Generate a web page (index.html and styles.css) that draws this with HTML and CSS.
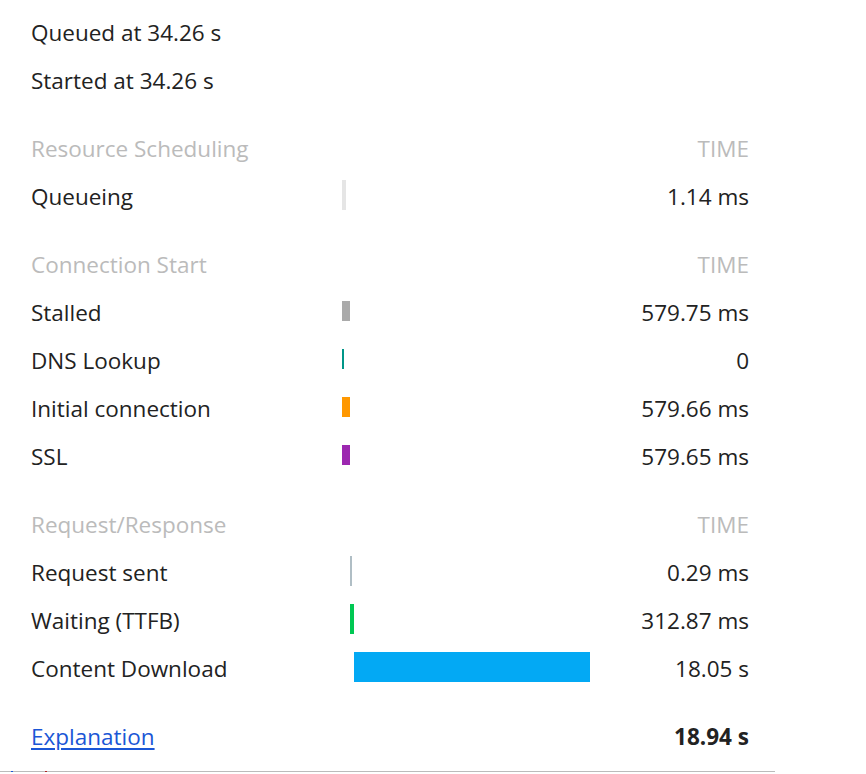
FILE: index.html
```html
<!DOCTYPE html>
<html>
<head>
<meta charset="utf-8">
<link rel="stylesheet" href="styles.css">
</head>
<body>
<div class="timing">
  <div class="meta">Queued at 34.26 s</div>
  <div class="meta">Started at 34.26 s</div>

  <div class="group">
    <div class="row head"><span class="label">Resource Scheduling</span><span></span><span class="time">TIME</span></div>
    <div class="row"><span class="label">Queueing</span><span class="track"><span class="bar tall queueing" style="margin-left:0;width:4px"></span></span><span class="time">1.14 ms</span></div>
  </div>

  <div class="group">
    <div class="row head"><span class="label">Connection Start</span><span></span><span class="time">TIME</span></div>
    <div class="row"><span class="label">Stalled</span><span class="track"><span class="bar stalled" style="margin-left:0;width:8px"></span></span><span class="time">579.75 ms</span></div>
    <div class="row"><span class="label">DNS Lookup</span><span class="track"><span class="bar dns" style="margin-left:0;width:2px"></span></span><span class="time">0</span></div>
    <div class="row"><span class="label">Initial connection</span><span class="track"><span class="bar connecting" style="margin-left:0;width:8px"></span></span><span class="time">579.66 ms</span></div>
    <div class="row"><span class="label">SSL</span><span class="track"><span class="bar ssl" style="margin-left:0;width:8px"></span></span><span class="time">579.65 ms</span></div>
  </div>

  <div class="group">
    <div class="row head"><span class="label">Request/Response</span><span></span><span class="time">TIME</span></div>
    <div class="row"><span class="label">Request sent</span><span class="track"><span class="bar tall sending" style="margin-left:8px;width:2px"></span></span><span class="time">0.29 ms</span></div>
    <div class="row"><span class="label">Waiting (TTFB)</span><span class="track"><span class="bar tall waiting" style="margin-left:8px;width:4px"></span></span><span class="time">312.87 ms</span></div>
    <div class="row"><span class="label">Content Download</span><span class="track"><span class="bar tall receiving" style="margin-left:12px;width:236px"></span></span><span class="time">18.05 s</span></div>
  </div>

  <div class="group">
    <div class="row footer"><a class="label link" href="#">Explanation</a><span></span><span class="time total">18.94 s</span></div>
  </div>
</div>
<div class="bottom-line"><span class="mark blue"></span><span class="mark red"></span></div>
</body>
</html>
```
FILE: styles.css
```css
html, body {
  margin: 0;
  padding: 0;
  background: #ffffff;
}
body {
  width: 866px;
  height: 774px;
  overflow: hidden;
  font-family: "Open Sans", "Noto Sans", sans-serif;
  font-size: 22.5px;
  color: #222222;
}
.timing {
  width: 718px;
  padding: 9px 0 0 31px;
  display: flex;
  flex-direction: column;
}
.meta {
  box-sizing: border-box;
  height: 48px;
  padding-bottom: 2px;
  display: flex;
  align-items: center;
  white-space: nowrap;
}
.group {
  margin-top: 20px;
  display: flex;
  flex-direction: column;
}
.row {
  box-sizing: border-box;
  height: 48px;
  padding-bottom: 2px;
  display: grid;
  grid-template-columns: 311px 248px 1fr;
  align-items: center;
  white-space: nowrap;
}
.head {
  color: #bbbbbb;
}
.time {
  text-align: right;
}
.track {
  height: 44px;
  align-self: start;
  display: flex;
  align-items: center;
}
.bar {
  display: block;
  height: 20px;
  flex: none;
}
.bar.tall {
  height: 30px;
}
.queueing { background: #e5e5e5; }
.stalled { background: #aaaaaa; }
.dns { background: #009688; }
.connecting { background: #ff9800; }
.ssl { background: #9c27b0; }
.sending { background: #b0bec5; }
.waiting { background: #00c853; }
.receiving { background: #03a9f4; }
.link {
  color: #1a56d6;
  text-decoration: underline;
  text-underline-offset: 3px;
}
.total {
  font-weight: 700;
}
.bottom-line {
  position: absolute;
  left: 0;
  top: 771px;
  width: 775px;
  height: 1px;
  background: #bbbbbb;
}
.mark {
  position: absolute;
  top: 0;
  width: 2px;
  height: 1px;
}
.mark.blue { left: 11px; background: #1a56d6; }
.mark.red { left: 45px; background: #b02020; }
```
